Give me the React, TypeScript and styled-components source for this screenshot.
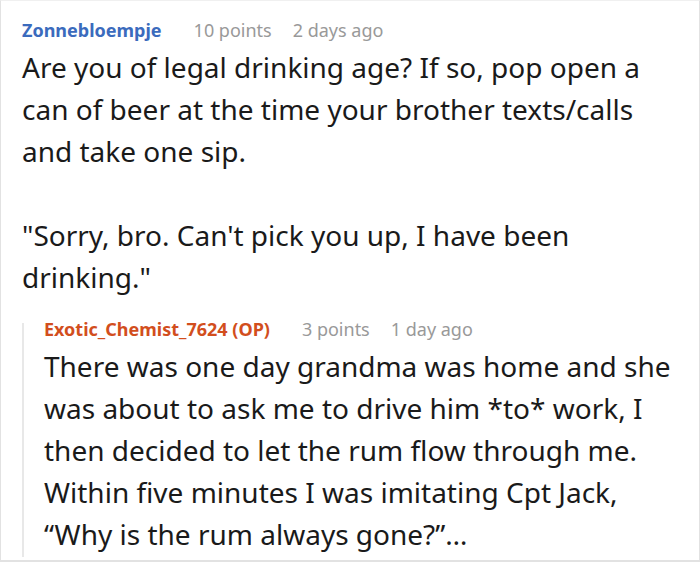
import styled, { createGlobalStyle } from 'styled-components'

const GlobalStyle = createGlobalStyle`
	html, body {
		margin: 0;
		padding: 0;
		background: #fff;
	}
	body {
		font-family: "Noto Sans", "Open Sans", sans-serif;
		color: #1a1a1a;
	}
`

type Comment = {
	author: string
	op?: boolean
	points: string
	time: string
	paragraphs: string[]
}

const parent: Comment = {
	author: 'Zonnebloempje',
	points: '10 points',
	time: '2 days ago',
	paragraphs: [
		'Are you of legal drinking age? If so, pop open a can of beer at the time your brother texts/calls and take one sip.',
		'"Sorry, bro. Can\'t pick you up, I have been drinking."',
	],
}

const reply: Comment = {
	author: 'Exotic_Chemist_7624 (OP)',
	op: true,
	points: '3 points',
	time: '1 day ago',
	paragraphs: [
		'There was one day grandma was home and she was about to ask me to drive him *to* work, I then decided to let the rum flow through me. Within five minutes I was imitating Cpt Jack, \u201cWhy is the rum always gone?\u201d\u2026',
	],
}

export default function App() {
	return (
		<>
			<GlobalStyle />
			<Card>
				<Header>
					<Author $op={parent.op}>{parent.author}</Author>
					<Meta>{parent.points}</Meta>
					<Meta>{parent.time}</Meta>
				</Header>
				<Body>
					{parent.paragraphs.map((p, i) => (
						<Paragraph key={i}>{p}</Paragraph>
					))}
				</Body>
				<Reply>
					<Header>
						<Author $op={reply.op}>{reply.author}</Author>
						<Meta>{reply.points}</Meta>
						<Meta>{reply.time}</Meta>
					</Header>
					<Body>
						{reply.paragraphs.map((p, i) => (
							<Paragraph key={i}>{p}</Paragraph>
						))}
					</Body>
				</Reply>
			</Card>
		</>
	)
}

const Card = styled.div`
	box-sizing: border-box;
	width: 700px;
	height: 562px;
	overflow: hidden;
	border: 1px solid #e2e2e2;
	border-top-color: #f0f0f0;
	border-bottom-width: 2px;
	padding: 23px 28px 0 21px;
`

const Header = styled.div`
	display: flex;
	align-items: center;
	gap: 21px;
	height: 12px;
	line-height: 12px;
	font-size: 18px;
	white-space: nowrap;
`

const Author = styled.span<{ $op?: boolean }>`
	font-weight: 700;
	color: ${(p) => (p.$op ? '#d24e1d' : '#3b6bbd')};
	margin-right: 11px;
`

const Meta = styled.span`
	color: #999;
`

const Body = styled.div`
	font-size: 28px;
	line-height: 42px;
	margin-top: 10px;
`

const Paragraph = styled.p`
	margin: 0 0 42px;

	&:last-child {
		margin-bottom: 0;
	}
`

const Reply = styled.div`
	margin-top: 25px;
	border-left: 2px solid #e8e8e8;
	padding: 0 0 2px 20px;
`
